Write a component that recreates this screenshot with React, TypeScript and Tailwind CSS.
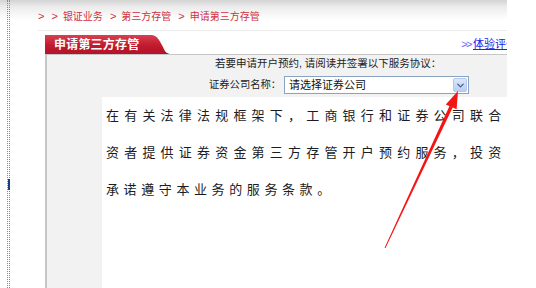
import { ChevronDown } from 'lucide-react'

const cjk = "font-['Liberation_Sans','Noto_Sans_CJK_SC',sans-serif]"

function Crumb({ text }: { text: string }) {
  return (
    <span className="flex items-center gap-[5px]">
      <span className="text-[11px] leading-none">&gt;</span>
      <span>{text}</span>
    </span>
  )
}

export default function App() {
  return (
    <div className={`relative flex w-[536px] h-[288px] overflow-hidden bg-white ${cjk}`}>
      <div className="flex w-[507px] shrink-0 overflow-hidden bg-[linear-gradient(to_bottom,#d4d4d4_0px,#ececec_7px,#ffffff_20px)]">
        {/* left dotted rail */}
        <div className="w-[38px] shrink-0 pl-[7px]">
          <div className="w-[3px] h-full border-x border-dotted border-[#8a8a8a] flex flex-col">
            <div className="mt-[179px] h-[11px] w-[2px] bg-[#1e3c86]" />
          </div>
        </div>

        <div className="flex-1 flex flex-col min-w-0">
          {/* breadcrumb */}
          <div className="h-[31px] shrink-0 border-b border-[#ececec] flex items-center pt-[2px] gap-[7px] text-[10px] text-[#d0303f]">
            <span className="text-[11px] leading-none">&gt;</span>
            <Crumb text="银证业务" />
            <Crumb text="第三方存管" />
            <Crumb text="申请第三方存管" />
          </div>

          {/* tab row */}
          <div className="mt-[4px] h-[19px] shrink-0 flex items-center justify-between pl-[7px]">
            <div className="relative h-[19px] w-[126px] bg-[linear-gradient(to_bottom,#d9404f,#c01a2d_55%,#b3132a)] [clip-path:path('M0,0_H106_C113,0_115,7_118,12_C120,17_122,19_126,19_H0_Z')] flex items-center pl-[9px]">
              <span className="text-[12px] font-bold text-white leading-none tracking-[0.2px]">申请第三方存管</span>
            </div>
            <div className="flex items-center whitespace-nowrap text-[11px] mr-[-10px]">
              <span className="text-[#6a6aff] tracking-[-1.5px]">&gt;&gt;</span>
              <span className="ml-[2px] text-[#2020ee] underline">体验评价</span>
            </div>
          </div>

          {/* panel */}
          <div className="ml-[7px] flex-1 flex flex-col bg-[#f2f2f2] border-t border-l-2 border-[#c6c6c6]">
            <div className="h-[17px] flex items-center pl-[168px] text-[10.5px] text-[#222] whitespace-nowrap">
              若要申请开户预约, 请阅读并签署以下服务协议：
            </div>
            <div className="mt-[4px] h-[18px] flex items-center pl-[162px] text-[10.3px] text-[#222] whitespace-nowrap">
              <span>证券公司名称：</span>
              <div className="ml-[3px] w-[185px] h-[18px] bg-white border border-[#8aa3c2] flex items-center justify-between pl-[4px] pr-[1px]">
                <span className="text-[11px] text-[#111]">请选择证券公司</span>
                <div className="w-[14px] h-[14px] rounded-[2px] bg-[linear-gradient(to_bottom,#dce6fb,#b9cdf5)] border border-[#b3c7ee] flex items-center justify-center">
                  <ChevronDown size={11} strokeWidth={3} className="text-[#4d6185]" />
                </div>
              </div>
            </div>
            <div className="mt-[3px] ml-[55px] flex-1 bg-white pl-[4px] text-[13px] leading-[37px] text-[#1c1c24] whitespace-nowrap overflow-hidden">
              <div className="tracking-[5.2px]">在有关法律法规框架下，工商银行和证券公司联合为投</div>
              <div className="tracking-[5.2px]">资者提供证券资金第三方存管开户预约服务，投资者在</div>
              <div className="tracking-[4.6px]">承诺遵守本业务的服务条款。</div>
            </div>
          </div>
        </div>
      </div>

      {/* red annotation arrow */}
      <svg className="absolute left-0 top-0 pointer-events-none" width="536" height="288" viewBox="0 0 536 288">
        <polygon points="452.8,107.2 449.6,105.8 384.6,247.8 385.4,248.2" fill="#f51414" />
        <polygon points="458,91 456.6,109.2 445.8,104.4" fill="#f51414" />
      </svg>
    </div>
  )
}
